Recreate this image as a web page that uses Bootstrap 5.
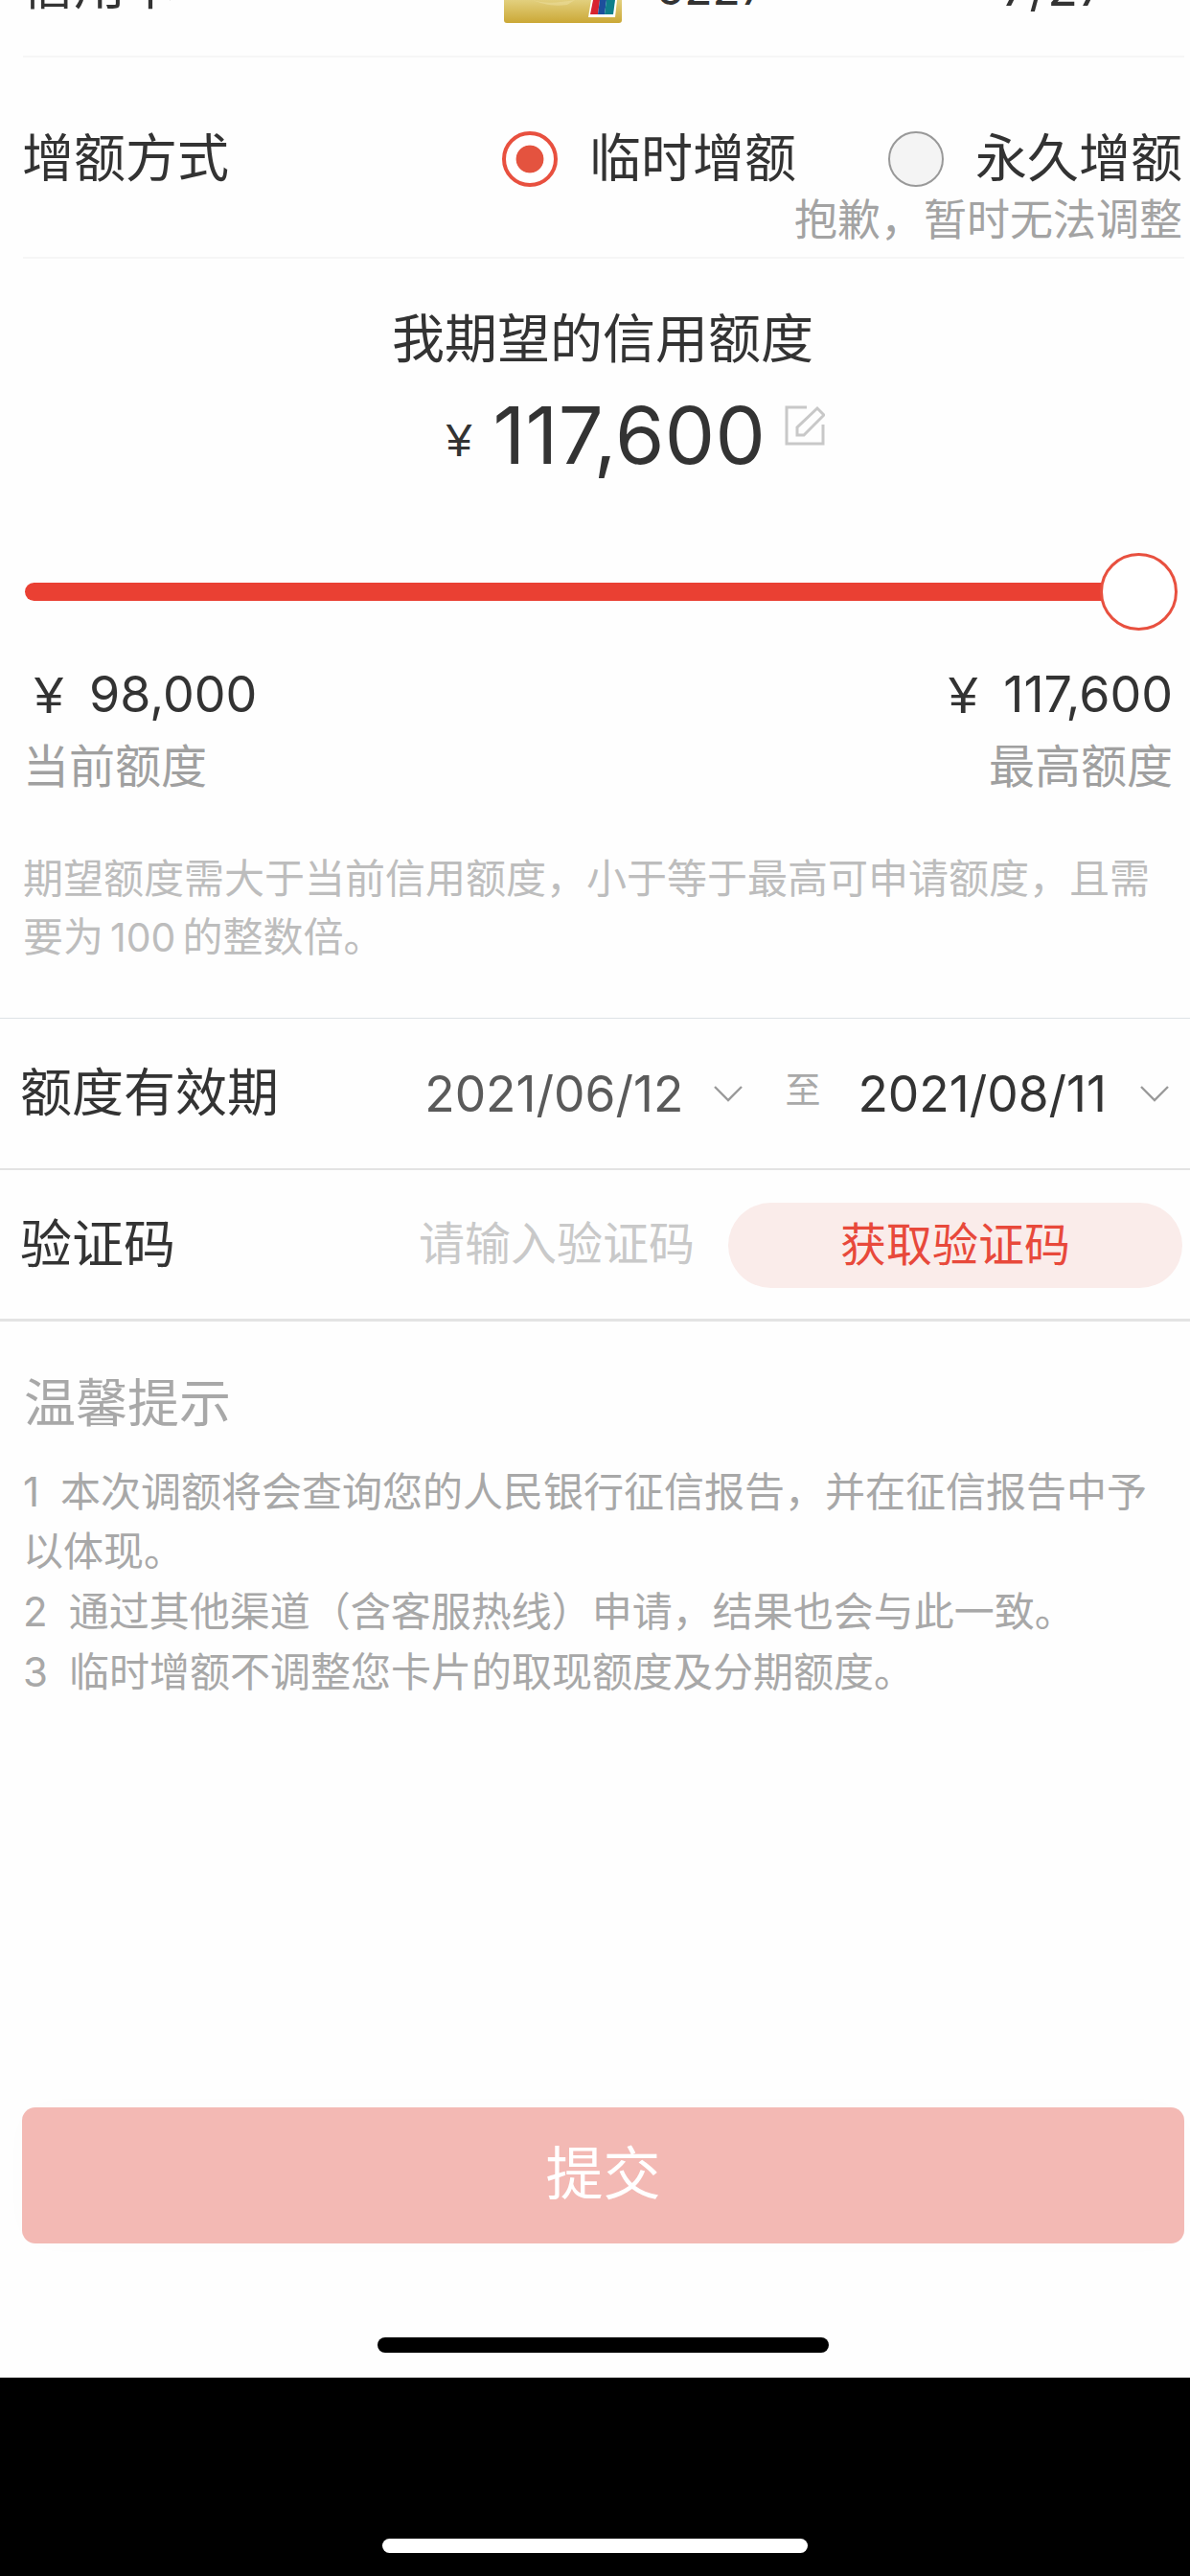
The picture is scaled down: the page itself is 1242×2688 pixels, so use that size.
<!DOCTYPE html>
<html lang="zh-CN">
<head>
<meta charset="utf-8">
<title>增额</title>
<link href="https://cdn.jsdelivr.net/npm/bootstrap@5.3.0/dist/css/bootstrap.min.css" rel="stylesheet">
<style>
html,body{margin:0;background:#000;}
body{font-family:"Liberation Sans","Noto Sans CJK SC",sans-serif;color:#333;}
.screen{width:1242px;height:2688px;overflow:hidden;}
.app{height:2481px;background:#fefefe;}
.blackband{height:207px;background:#000;padding-top:168px;}
.pill-w{width:444px;height:15px;margin-left:399px;background:#fff;border-radius:8px;}
.pill-k{width:471px;height:16px;background:#000;border-radius:8px;margin:98px auto 26px auto;}
.t54{font-size:54px;line-height:60px;}
.hairline{margin:0 6px 0 24px;border-bottom:2px solid #f6f6f6;}
.cardrow{height:58px;overflow:hidden;align-items:flex-start;padding-left:23px;}
.clip-label{margin:-44px 0 0 0;width:162px;}
.cardpic{margin:0 0 0 341px;display:block;flex:none;}
.clip-num{margin:-42px 0 0 36px;font-family:Inter,"Liberation Sans",sans-serif;font-size:48px;width:360px;}
.clip-num2{margin:-42px 0 0 0;font-family:Inter,"Liberation Sans",sans-serif;font-size:52px;}
.methodrow{height:208px;padding-top:76px;}
.methodline{height:60px;padding:0 8px 0 23px;}
.methodlabel{margin-right:auto;}
.form-check-input.rd{width:58px;height:58px;margin:0 33px 0 0;flex:none;background-color:#f4f4f4;border:2px solid #999;opacity:1;}
.form-check-input.rd:checked{background-color:#fff;border:4px solid #e8503f;background-image:radial-gradient(circle,#e4533f 14px,transparent 14.8px);}
.opt-gap{margin-right:96px;}
.sorry{font-size:45px;line-height:45px;margin:12px 8px 0 0;color:#a3a3a3;text-align:right;}
.wishtitle{padding:54px 0 0 16px;text-align:center;font-size:55px;}
.amount{height:90px;margin-top:25px;padding-left:85px;}
.yen-s{font-size:48px;line-height:90px;margin:12px 22px 0 0;}
.bigval{font-family:Inter,"Liberation Sans",sans-serif;font-size:83px;line-height:90px;letter-spacing:.4px;}
.editic{margin:-20px 0 0 20px;}
.sliderbox{height:81px;margin-top:78px;padding:0 13px 0 26px;}
.track{flex:1 1 auto;height:19px;background:#ea4033;border-radius:10px 0 0 10px;}
.knob{width:81px;height:81px;border-radius:50%;border:3px solid #e8503f;background:#fff;margin-left:-4px;flex:none;position:relative;}
.limits{margin-top:37px;padding:0 18px 0 24px;}
.lim-yen{margin:0 27px 0 12px;font-size:54px;}
.lim-num{font-family:Inter,"Liberation Sans",sans-serif;font-size:52px;}
.lim-lab{font-size:48px;line-height:46px;margin-top:23px;color:#a0a0a0;}
.hint{font-size:42px;line-height:61px;color:#bdbdbd;margin:63px 30px 53px 24px;}
.hint-n{font-family:Inter,"Liberation Sans",sans-serif;font-size:41px;margin:0 7px;}
.fullrow{height:159px;padding:0 22px 0 21px;border-bottom:2px solid #e3e3e3;}
.dt{font-family:Inter,"Liberation Sans",sans-serif;font-size:51.5px;line-height:60px;}
.dt-a{color:#5a5a5a;margin-left:auto;}
.chev{margin:0 0 0 35px;flex:none;}
.chev-a{margin-left:32px;}
.to{font-size:37px;color:#a9a9a9;margin:-4px 39px 0 44px;line-height:50px;}
.coderow{height:158px;padding:1px 8px 0 21px;border-bottom:3px solid #e3e3e3;}
.ph{font-size:48px;color:#c9c9c9;margin-left:auto;line-height:60px;}
.btn.getcode{width:474px;height:89px;margin-left:35px;background:#faecea;color:#e8493b;border:0;font-size:48px;line-height:89px;padding:0;}
.tips{padding:56px 30px 0 25px;color:#a8a8a8;}
.tiplines{font-size:42px;line-height:62px;margin:31px 0 0 -1px;}
.tiplines span{font-family:Inter,"Liberation Sans",sans-serif;margin-right:22px;}
.subwrap{margin:auto 6px 0 23px;}
.btn.submit{display:block;width:100%;height:142px;background:#f3b9b4;border:0;color:#fff;font-size:60px;border-radius:14px;padding:0;box-shadow:0 0 40px rgba(0,0,0,.012);opacity:1;}
</style>
</head>
<body>
<div class="screen">
  <div class="app d-flex flex-column">
    <div class="cardrow d-flex">
      <div class="t54 clip-label">信用卡</div>
      <svg class="cardpic" width="123" height="24" viewBox="0 0 123 24" xmlns="http://www.w3.org/2000/svg" aria-hidden="true">
        <defs><linearGradient id="g" x1="0" y1="0" x2="0" y2="1"><stop offset="0" stop-color="#e6d68a"/><stop offset="1" stop-color="#cba836"/></linearGradient></defs>
        <path d="M0 -4H123V21a3 3 0 0 1-3 3H3a3 3 0 0 1-3-3Z" fill="url(#g)"/>
        <path d="M30 0C44 5 60 2 74 0L66 5C50 7 40 4 30 0Z" fill="#efe2a6" opacity=".45"/>
        <path d="M91 0H118L116 18H88Z" fill="#fff"/>
        <path d="M93 0H100L98 15H90Z" fill="#d8232f"/>
        <path d="M100 0H107L105 15H98Z" fill="#1d4f9c"/>
        <path d="M107 0H116L114 15H105Z" fill="#0f7f8a"/>
      </svg>
      <div class="t54 clip-num">5227</div>
      <div class="t54 clip-num2">7/27</div>
    </div>
    <div class="hairline"></div>

    <div class="methodrow">
      <div class="methodline d-flex align-items-center">
        <div class="t54 methodlabel">增额方式</div>
        <input class="form-check-input rd" type="radio" name="m" checked aria-label="临时增额">
        <div class="t54 opt-gap">临时增额</div>
        <input class="form-check-input rd" type="radio" name="m" disabled aria-label="永久增额">
        <div class="t54">永久增额</div>
      </div>
      <div class="sorry">抱歉，暂时无法调整</div>
    </div>
    <div class="hairline"></div>

    <div class="t54 wishtitle">我期望的信用额度</div>
    <div class="amount d-flex justify-content-center align-items-center">
      <span class="yen-s">¥</span>
      <span class="bigval">117,600</span>
      <svg class="editic" width="42" height="42" viewBox="0 0 42 42" xmlns="http://www.w3.org/2000/svg" aria-hidden="true" fill="none" stroke="#c8c8c8" stroke-width="3">
        <path d="M23 2H2V40H40V20"/>
        <path d="M13 31V23L34 3L41 10L20 31Z"/>
      </svg>
    </div>

    <div class="sliderbox d-flex align-items-center">
      <div class="track"></div>
      <div class="knob"></div>
    </div>

    <div class="limits d-flex justify-content-between">
      <div>
        <div class="t54 d-flex"><span class="lim-yen">¥</span><span class="lim-num">98,000</span></div>
        <div class="lim-lab">当前额度</div>
      </div>
      <div class="text-end">
        <div class="t54 d-flex justify-content-end"><span class="lim-yen">¥</span><span class="lim-num">117,600</span></div>
        <div class="lim-lab">最高额度</div>
      </div>
    </div>

    <div class="hint">期望额度需大于当前信用额度，小于等于最高可申请额度，且需要为<span class="hint-n">100</span>的整数倍。</div>

    <div class="fullrow d-flex align-items-center border-top">
      <div class="t54">额度有效期</div>
      <div class="dt dt-a">2021/06/12</div>
      <svg class="chev chev-a" width="30" height="17" viewBox="0 0 30 17" fill="none" stroke="#9a9a9a" stroke-width="2.4" xmlns="http://www.w3.org/2000/svg" aria-hidden="true"><path d="M1 1L15 15L29 1"/></svg>
      <div class="to">至</div>
      <div class="dt">2021/08/11</div>
      <svg class="chev" width="30" height="17" viewBox="0 0 30 17" fill="none" stroke="#9a9a9a" stroke-width="2.4" xmlns="http://www.w3.org/2000/svg" aria-hidden="true"><path d="M1 1L15 15L29 1"/></svg>
    </div>

    <div class="coderow d-flex align-items-center">
      <div class="t54">验证码</div>
      <div class="ph">请输入验证码</div>
      <button type="button" class="btn getcode rounded-pill">获取验证码</button>
    </div>

    <div class="tips">
      <div class="t54">温馨提示</div>
      <div class="tiplines">
        <div><span>1</span>本次调额将会查询您的人民银行征信报告，并在征信报告中予以体现。</div>
        <div><span>2</span>通过其他渠道（含客服热线）申请，结果也会与此一致。</div>
        <div><span>3</span>临时增额不调整您卡片的取现额度及分期额度。</div>
      </div>
    </div>

    <div class="subwrap">
      <button type="button" class="btn submit">提交</button>
      <div class="pill-k"></div>
    </div>
  </div>
  <div class="blackband"><div class="pill-w"></div></div>
</div>
<script src="https://cdn.jsdelivr.net/npm/bootstrap@5.3.0/dist/js/bootstrap.bundle.min.js"></script>
</body>
</html>
